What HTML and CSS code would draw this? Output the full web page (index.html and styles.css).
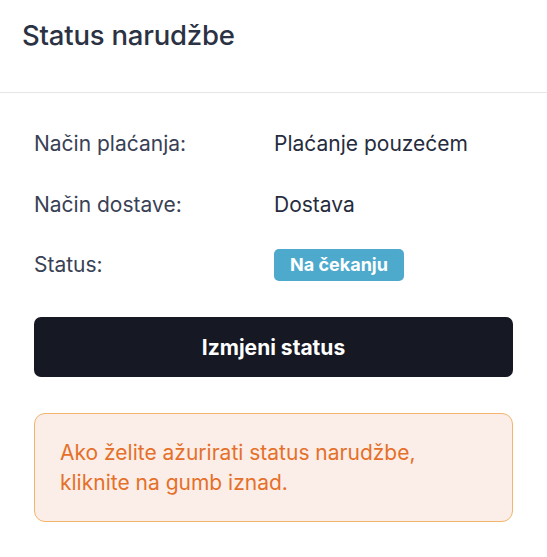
FILE: index.html
```html
<!DOCTYPE html>
<html lang="hr">
<head>
<meta charset="utf-8">
<title>Status narudžbe</title>
<link rel="stylesheet" href="styles.css">
</head>
<body>
<div class="card">
  <header class="card-header">
    <h1 class="card-title">Status narudžbe</h1>
  </header>
  <section class="card-body">
    <dl class="info">
      <dt class="info-label">Način plaćanja:</dt>
      <dd class="info-value">Plaćanje pouzećem</dd>
      <dt class="info-label">Način dostave:</dt>
      <dd class="info-value">Dostava</dd>
      <dt class="info-label">Status:</dt>
      <dd class="info-value"><span class="badge">Na čekanju</span></dd>
    </dl>
    <button class="btn" type="button">Izmjeni status</button>
    <div class="alert">Ako želite ažurirati status narudžbe,<br>kliknite na gumb iznad.</div>
  </section>
</div>
</body>
</html>
```
FILE: styles.css
```css
* { box-sizing: border-box; }
html, body { margin: 0; padding: 0; background: #ffffff; }
body { font-family: Inter, "Noto Sans", sans-serif; }

.card-header {
  padding: 17px 22px 0;
  height: 93px;
  border-bottom: 1px solid #e6e6e8;
}
.card-title {
  margin: 0;
  font-size: 27.5px;
  line-height: 36px;
  font-weight: 500;
  color: #2b3243;
  letter-spacing: -0.2px;
}

.card-body {
  padding: 35px 34px 0;
  display: flex;
  flex-direction: column;
}

.info {
  margin: 0;
  display: grid;
  grid-template-columns: 240px 1fr;
  grid-auto-rows: 32px;
  row-gap: 28.5px;
  align-items: center;
}
.info-label {
  font-size: 21px;
  line-height: 32px;
  color: #394155;
}
.info-value {
  margin: 0;
  font-size: 21px;
  line-height: 32px;
  color: #262c3d;
  display: flex;
  align-items: center;
}

.badge {
  display: inline-flex;
  align-items: center;
  height: 32px;
  padding: 0 16px;
  background: #4eaacc;
  color: #ffffff;
  font-weight: 700;
  font-size: 18px;
  border-radius: 5px;
}

.btn {
  margin-top: 36px;
  height: 60px;
  width: 100%;
  border: none;
  border-radius: 7px;
  background: #161823;
  color: #ffffff;
  font-family: inherit;
  font-size: 21px;
  font-weight: 700;
}

.alert {
  margin-top: 36px;
  padding: 23.5px 25px;
  border: 1px solid #f3b56c;
  border-radius: 11px;
  background: #fbeee8;
  color: #e5702a;
  font-size: 21px;
  line-height: 30px;
}
```
